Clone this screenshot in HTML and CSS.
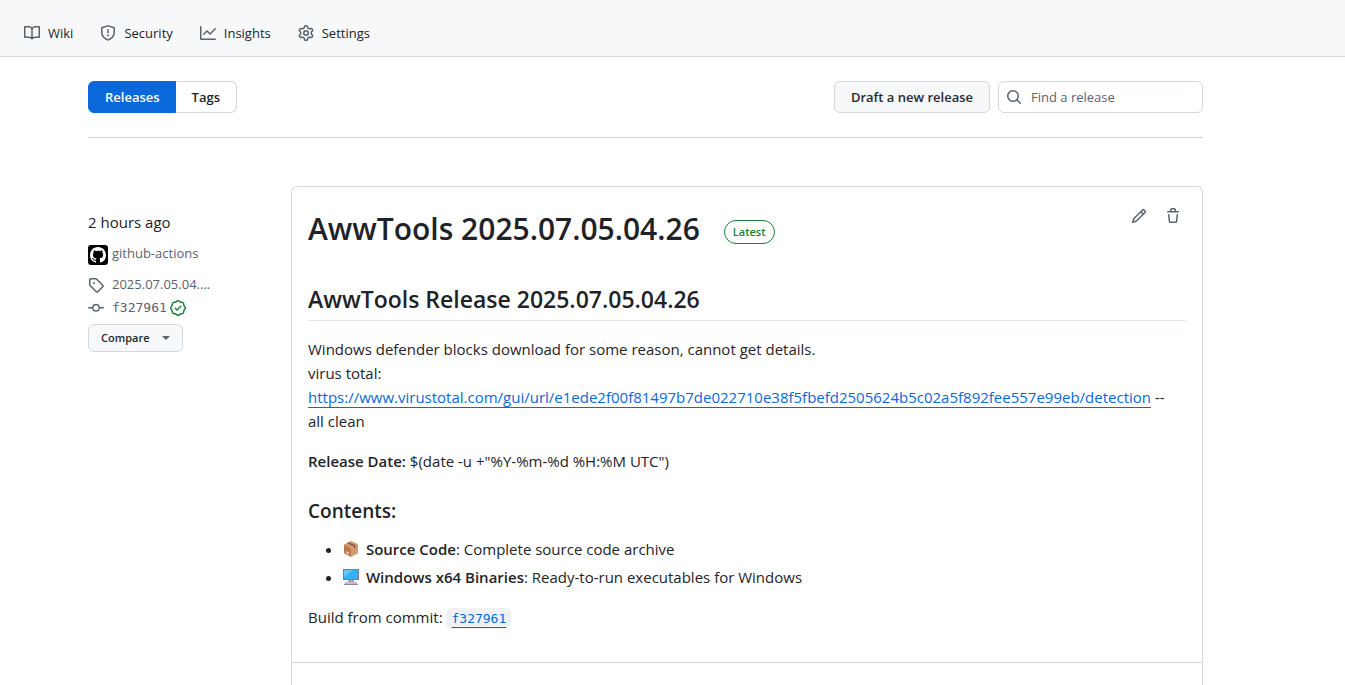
FILE: index.html
```html
<!DOCTYPE html>
<html lang="en">
<head>
<meta charset="utf-8">
<meta name="viewport" content="width=device-width, initial-scale=1">
<title>Releases</title>
<link rel="stylesheet" href="styles.css">
</head>
<body>
<header class="repo-header">
  <nav class="repo-nav" aria-label="Repository">
    <a class="repo-link" href="#wiki"><svg class="icon" viewBox="0 0 16 16" aria-hidden="true"><path d="M0 1.75A.75.75 0 0 1 .75 1h4.253c1.227 0 2.317.59 3 1.501A3.743 3.743 0 0 1 11.006 1h4.245a.75.75 0 0 1 .75.75v10.5a.75.75 0 0 1-.75.75h-4.507a2.25 2.25 0 0 0-1.591.659l-.622.621a.75.75 0 0 1-1.06 0l-.622-.621A2.25 2.25 0 0 0 5.258 13H.75a.75.75 0 0 1-.75-.75Zm7.251 10.324.004-5.073-.002-2.253A2.25 2.25 0 0 0 5.003 2.5H1.5v9h3.757a3.75 3.75 0 0 1 1.994.574ZM8.755 4.75l-.004 7.322a3.752 3.752 0 0 1 1.992-.572H14.5v-9h-3.495a2.25 2.25 0 0 0-2.25 2.25Z"/></svg>Wiki</a>
    <a class="repo-link" href="#security"><svg class="icon" viewBox="0 0 16 16" aria-hidden="true"><path d="M7.467.133a1.748 1.748 0 0 1 1.066 0l5.25 1.68A1.75 1.75 0 0 1 15 3.48V7c0 1.566-.32 3.182-1.303 4.682-.983 1.498-2.585 2.813-5.032 3.855a1.697 1.697 0 0 1-1.33 0c-2.447-1.042-4.049-2.357-5.032-3.855C1.32 10.182 1 8.566 1 7V3.48a1.75 1.75 0 0 1 1.217-1.667Zm.61 1.429a.25.25 0 0 0-.153 0l-5.25 1.68a.25.25 0 0 0-.174.238V7c0 1.358.275 2.666 1.057 3.86.784 1.194 2.121 2.34 4.366 3.297a.196.196 0 0 0 .154 0c2.245-.956 3.582-2.104 4.366-3.298C13.225 9.666 13.5 8.36 13.5 7V3.48a.251.251 0 0 0-.174-.237l-5.25-1.68ZM8.75 4.75v3a.75.75 0 0 1-1.5 0v-3a.75.75 0 0 1 1.5 0ZM9 10.5a1 1 0 1 1-2 0 1 1 0 0 1 2 0Z"/></svg>Security</a>
    <a class="repo-link" href="#insights"><svg class="icon" viewBox="0 0 16 16" aria-hidden="true"><path d="M1.5 1.75V13.5h13.75a.75.75 0 0 1 0 1.5H.75a.75.75 0 0 1-.75-.75V1.75a.75.75 0 0 1 1.5 0Zm14.28 2.53-5.25 5.25a.75.75 0 0 1-1.06 0L7 7.06 4.28 9.78a.751.751 0 0 1-1.042-.018.751.751 0 0 1-.018-1.042l3.25-3.25a.75.75 0 0 1 1.06 0L10 7.94l4.72-4.72a.751.751 0 0 1 1.042.018.751.751 0 0 1 .018 1.042Z"/></svg>Insights</a>
    <a class="repo-link" href="#settings"><svg class="icon" viewBox="0 0 16 16" aria-hidden="true"><path d="M8 0a8.2 8.2 0 0 1 .701.031C9.444.095 9.99.645 10.16 1.29l.288 1.107c.018.066.079.158.212.224.231.114.454.243.668.386.123.082.233.09.299.071l1.103-.303c.644-.176 1.392.021 1.82.63.27.385.506.792.704 1.218.315.675.111 1.422-.364 1.891l-.814.806c-.049.048-.098.147-.088.294.016.257.016.515 0 .772-.01.147.038.246.088.294l.814.806c.475.469.679 1.216.364 1.891a7.977 7.977 0 0 1-.704 1.217c-.428.61-1.176.807-1.82.63l-1.102-.302c-.067-.019-.177-.011-.3.071a5.909 5.909 0 0 1-.668.386c-.133.066-.194.158-.211.224l-.29 1.106c-.168.646-.715 1.196-1.458 1.26a8.006 8.006 0 0 1-1.402 0c-.743-.064-1.289-.614-1.458-1.26l-.289-1.106c-.018-.066-.079-.158-.212-.224a5.738 5.738 0 0 1-.668-.386c-.123-.082-.233-.09-.299-.071l-1.103.303c-.644.176-1.392-.021-1.82-.63a8.12 8.12 0 0 1-.704-1.218c-.315-.675-.111-1.422.363-1.891l.815-.806c.05-.048.098-.147.088-.294a6.214 6.214 0 0 1 0-.772c.01-.147-.038-.246-.088-.294l-.815-.806C.635 6.045.431 5.298.746 4.623a7.92 7.92 0 0 1 .704-1.217c.428-.61 1.176-.807 1.82-.63l1.102.302c.067.019.177.011.3-.071.214-.143.437-.272.668-.386.133-.066.194-.158.211-.224l.29-1.106C6.009.645 6.556.095 7.299.03 7.53.01 7.764 0 8 0Zm-.571 1.525c-.036.003-.108.036-.137.146l-.289 1.105c-.147.561-.549.967-.998 1.189-.173.086-.34.183-.5.29-.417.278-.97.423-1.529.27l-1.103-.303c-.109-.03-.175.016-.195.045-.22.312-.412.644-.573.99-.014.031-.021.11.059.19l.815.806c.411.406.562.957.53 1.456a4.709 4.709 0 0 0 0 .582c.032.499-.119 1.05-.53 1.456l-.815.806c-.081.08-.073.159-.059.19.162.346.353.677.573.989.02.03.085.076.195.046l1.102-.303c.56-.153 1.113-.008 1.53.27.161.107.328.204.501.29.447.222.85.629.997 1.189l.289 1.105c.029.109.101.143.137.146a6.6 6.6 0 0 0 1.142 0c.036-.003.108-.036.137-.146l.289-1.105c.147-.561.549-.967.998-1.189.173-.086.34-.183.5-.29.417-.278.97-.423 1.529-.27l1.103.303c.109.029.175-.016.195-.045.22-.313.411-.644.573-.99.014-.031.021-.11-.059-.19l-.815-.806c-.411-.406-.562-.957-.53-1.456a4.709 4.709 0 0 0 0-.582c-.032-.499.119-1.05.53-1.456l.815-.806c.081-.08.073-.159.059-.19a6.464 6.464 0 0 0-.573-.989c-.02-.03-.085-.076-.195-.046l-1.102.303c-.56.153-1.113.008-1.53-.27a4.44 4.44 0 0 0-.501-.29c-.447-.222-.85-.629-.997-1.189l-.289-1.105c-.029-.11-.101-.143-.137-.146a6.6 6.6 0 0 0-1.142 0ZM11 8a3 3 0 1 1-6 0 3 3 0 0 1 6 0ZM9.5 8a1.5 1.5 0 1 0-3.001.001A1.5 1.5 0 0 0 9.5 8Z"/></svg>Settings</a>
  </nav>
</header>

<main class="page">
  <div class="toolbar">
    <nav class="tabs" aria-label="Releases and tags">
      <a class="tab tab-current" href="#releases" aria-current="page">Releases</a>
      <a class="tab" href="#tags">Tags</a>
    </nav>
    <div class="actions">
      <button class="button" type="button">Draft a new release</button>
      <label class="search">
        <svg class="icon" viewBox="0 0 16 16" aria-hidden="true"><path d="M10.68 11.74a6 6 0 0 1-7.922-8.982 6 6 0 0 1 8.982 7.922l3.04 3.04a.749.749 0 0 1-.326 1.275.749.749 0 0 1-.734-.215ZM11.5 7a4.499 4.499 0 1 0-8.997 0A4.499 4.499 0 0 0 11.5 7Z"/></svg>
        <input class="search-input" type="search" placeholder="Find a release" aria-label="Find a release">
      </label>
    </div>
  </div>

  <section class="release">
    <aside class="meta">
      <time class="meta-time">2 hours ago</time>
      <a class="meta-row meta-author" href="#author"><svg class="avatar" viewBox="0 0 20 20" aria-hidden="true"><rect width="20" height="20" rx="3" fill="#000"/><path fill="#fff" transform="translate(2 2)" d="M8 0c4.42 0 8 3.58 8 8a8.013 8.013 0 0 1-5.45 7.59c-.4.08-.55-.17-.55-.38 0-.27.01-1.13.01-2.2 0-.75-.25-1.23-.54-1.48 1.78-.2 3.65-.88 3.65-3.95 0-.88-.31-1.59-.82-2.15.08-.2.36-1.02-.08-2.12 0 0-.67-.22-2.2.82-.64-.18-1.32-.27-2-.27-.68 0-1.36.09-2 .27-1.53-1.03-2.2-.82-2.2-.82-.44 1.1-.16 1.92-.08 2.12-.51.56-.82 1.28-.82 2.15 0 3.06 1.86 3.75 3.64 3.95-.23.2-.44.55-.51 1.07-.46.21-1.61.55-2.33-.66-.15-.24-.6-.83-1.23-.82-.67.01-.27.38.01.53.34.19.73.9.82 1.13.16.45.68 1.31 2.69.94 0 .67.01 1.3.01 1.49 0 .21-.15.45-.55.38A7.995 7.995 0 0 1 0 8c0-4.42 3.58-8 8-8Z"/></svg><span>github-actions</span></a>
      <a class="meta-row" href="#tag"><svg class="icon" viewBox="0 0 16 16" aria-hidden="true"><path d="M1 7.775V2.75C1 1.784 1.784 1 2.75 1h5.025c.464 0 .91.184 1.238.513l6.25 6.25a1.75 1.75 0 0 1 0 2.474l-5.026 5.026a1.75 1.75 0 0 1-2.474 0l-6.25-6.25A1.752 1.752 0 0 1 1 7.775Zm1.5 0c0 .066.026.13.073.177l6.25 6.25a.25.25 0 0 0 .354 0l5.025-5.025a.25.25 0 0 0 0-.354l-6.25-6.25a.25.25 0 0 0-.177-.073H2.75a.25.25 0 0 0-.25.25ZM6 5a1 1 0 1 1 0 2 1 1 0 0 1 0-2Z"/></svg><span>2025.07.05.04....</span></a>
      <div class="meta-row"><svg class="icon" viewBox="0 0 16 16" aria-hidden="true"><path d="M11.93 8.5a4.002 4.002 0 0 1-7.86 0H.75a.75.75 0 0 1 0-1.5h3.32a4.002 4.002 0 0 1 7.86 0h3.32a.75.75 0 0 1 0 1.5Zm-1.43-.75a2.5 2.5 0 1 0-5 0 2.5 2.5 0 0 0 5 0Z"/></svg><a class="commit" href="#commit">f327961</a><svg class="icon verified" viewBox="0 0 16 16" role="img" aria-label="Verified"><path d="m9.585.52.929.68c.153.112.331.186.518.215l1.138.175a2.678 2.678 0 0 1 2.24 2.24l.174 1.139c.029.187.103.365.215.518l.68.928a2.677 2.677 0 0 1 0 3.17l-.68.928a1.174 1.174 0 0 0-.215.518l-.175 1.138a2.678 2.678 0 0 1-2.241 2.241l-1.138.175a1.17 1.17 0 0 0-.518.215l-.928.68a2.677 2.677 0 0 1-3.17 0l-.928-.68a1.174 1.174 0 0 0-.518-.215L3.83 14.41a2.678 2.678 0 0 1-2.24-2.24l-.175-1.138a1.17 1.17 0 0 0-.215-.518l-.68-.928a2.677 2.677 0 0 1 0-3.17l.68-.928c.112-.153.186-.331.215-.518l.175-1.14a2.678 2.678 0 0 1 2.24-2.24l1.139-.175c.187-.029.365-.103.518-.215l.928-.68a2.677 2.677 0 0 1 3.17 0ZM7.303 1.728l-.927.68a2.67 2.67 0 0 1-1.18.489l-1.137.174a1.179 1.179 0 0 0-.987.987l-.174 1.136a2.677 2.677 0 0 1-.489 1.18l-.68.928a1.18 1.18 0 0 0 0 1.394l.68.927c.256.348.424.753.489 1.18l.174 1.137c.078.509.478.909.987.987l1.136.174a2.67 2.67 0 0 1 1.18.489l.928.68c.414.305.979.305 1.394 0l.927-.68a2.67 2.67 0 0 1 1.18-.489l1.137-.174a1.18 1.18 0 0 0 .987-.987l.174-1.136a2.67 2.67 0 0 1 .489-1.18l.68-.928a1.176 1.176 0 0 0 0-1.394l-.68-.927a2.686 2.686 0 0 1-.489-1.18l-.174-1.137a1.179 1.179 0 0 0-.987-.987l-1.136-.174a2.677 2.677 0 0 1-1.18-.489l-.928-.68a1.176 1.176 0 0 0-1.394 0ZM11.28 6.78l-3.75 3.75a.75.75 0 0 1-1.06 0L4.72 8.78a.751.751 0 0 1 .018-1.042.751.751 0 0 1 1.042-.018L7 8.94l3.22-3.22a.751.751 0 0 1 1.042.018.751.751 0 0 1 .018 1.042Z"/></svg></div>
      <button class="button button-small" type="button">Compare<span class="caret"></span></button>
    </aside>

    <article class="card">
      <div class="card-body">
        <div class="card-head">
          <h1 class="title">AwwTools 2025.07.05.04.26</h1>
          <span class="badge">Latest</span>
          <div class="card-tools">
            <button class="icon-button" type="button" aria-label="Edit release"><svg class="icon" viewBox="0 0 16 16" aria-hidden="true"><path d="M11.013 1.427a1.75 1.75 0 0 1 2.474 0l1.086 1.086a1.75 1.75 0 0 1 0 2.474l-8.61 8.61c-.21.21-.47.364-.756.445l-3.251.93a.75.75 0 0 1-.927-.928l.929-3.25c.081-.286.235-.547.445-.758l8.61-8.61Zm.176 4.823L9.75 4.81l-6.286 6.287a.253.253 0 0 0-.064.108l-.558 1.953 1.953-.558a.253.253 0 0 0 .108-.064Zm1.238-3.763a.25.25 0 0 0-.354 0L10.811 3.75l1.439 1.44 1.263-1.263a.25.25 0 0 0 0-.354Z"/></svg></button>
            <button class="icon-button" type="button" aria-label="Delete release"><svg class="icon" viewBox="0 0 16 16" aria-hidden="true"><path d="M11 1.75V3h2.25a.75.75 0 0 1 0 1.5H2.75a.75.75 0 0 1 0-1.5H5V1.75C5 .784 5.784 0 6.75 0h2.5C10.216 0 11 .784 11 1.75ZM4.496 6.675l.66 6.6a.25.25 0 0 0 .249.225h5.19a.25.25 0 0 0 .249-.225l.66-6.6a.75.75 0 0 1 1.492.149l-.66 6.6A1.748 1.748 0 0 1 10.595 15h-5.19a1.75 1.75 0 0 1-1.741-1.575l-.66-6.6a.75.75 0 1 1 1.492-.15ZM6.5 1.75V3h3V1.75a.25.25 0 0 0-.25-.25h-2.5a.25.25 0 0 0-.25.25Z"/></svg></button>
          </div>
        </div>
        <div class="notes">
          <h2>AwwTools Release 2025.07.05.04.26</h2>
          <p>Windows defender blocks download for some reason, cannot get details.<br>virus total:<br><a class="link" href="#detection">https://www.virustotal.com/gui/url/e1ede2f00f81497b7de022710e38f5fbefd2505624b5c02a5f892fee557e99eb/detection</a> -- all&nbsp;clean</p>
          <p><strong>Release Date:</strong> $(date -u +"%Y-%m-%d %H:%M UTC")</p>
          <h3>Contents:</h3>
          <ul>
            <li><svg class="emoji" viewBox="0 0 16 16" aria-hidden="true"><path fill="#cf9468" d="M8 0 15 3.2 8 7 1 3.5z"/><path fill="#b97850" d="M1 3.5 8 7v9l-7-3.7z"/><path fill="#d79b70" d="M8 7l7-3.8v9L8 16z"/><path fill="#8a5539" d="M4 2 5.5 1.3 12.5 4.6v2.2L11 7.6V5.4z"/><path fill="#e8c3aa" d="m3 10 3 1.6v2L3 12z"/></svg> <strong>Source Code</strong>: Complete source code archive</li>
            <li><svg class="emoji" viewBox="0 0 16 16" aria-hidden="true"><path fill="#7c7a91" d="M0 0h16v11H0z"/><path fill="#35b2f2" d="M1 1h14v9H1z"/><path fill="#65c8fa" d="M1 1h9L1 8z"/><path fill="#a7a2b4" d="M5 11h6v2H5z"/><path fill="#c6bdca" d="M2 13h12l1 3H1z"/><path fill="#8e889f" d="M1 15h14v1H1z"/></svg> <strong>Windows x64 Binaries</strong>: Ready-to-run executables for Windows</li>
          </ul>
          <p>Build from commit: <code><a class="link" href="#commit">f327961</a></code></p>
        </div>
      </div>
      <div class="card-assets"></div>
    </article>
  </section>
</main>
</body>
</html>
```

FILE: styles.css
```css
* {
  box-sizing: border-box;
}

body {
  display: flex;
  flex-direction: column;
  min-height: 100vh;
  margin: 0;
  background: #fff;
  color: #1f2328;
  font: 15px/24px "Open Sans", "Noto Sans", sans-serif;
}

a {
  color: inherit;
  text-decoration: none;
}

.icon {
  flex: none;
  width: 16px;
  height: 16px;
  fill: #59636e;
}

.repo-header {
  padding: 22px 24px 12px;
  border-bottom: 1px solid #d1d9e0;
  background: #f6f8fa;
}

.repo-nav {
  display: flex;
  gap: 27px;
}

.repo-link {
  display: flex;
  align-items: center;
  gap: 8px;
  font-size: 13px;
  line-height: 22px;
}

.page {
  display: flex;
  flex: 1;
  flex-direction: column;
  padding: 24px 142px 0 88px;
}

.toolbar {
  display: flex;
  justify-content: space-between;
  padding-bottom: 24px;
  border-bottom: 1px solid #d1d9e0;
}

.tabs,
.actions {
  display: flex;
}

.actions {
  gap: 8px;
}

.tab {
  padding: 0 16px;
  border: 1px solid #d1d9e0;
  border-left: 0;
  border-radius: 0 6px 6px 0;
  font-size: 13px;
  font-weight: 600;
  line-height: 30px;
}

.tab-current {
  padding: 0 15px 0 16px;
  border: 1px solid #0969da;
  border-radius: 6px 0 0 6px;
  background: #0969da;
  color: #fff;
}

.button {
  height: 32px;
  padding: 0 16px;
  border: 1px solid #d1d9e0;
  border-radius: 6px;
  background: #f6f8fa;
  color: #25292e;
  font: 600 13px/20px "Open Sans", "Noto Sans", sans-serif;
}

.button-small {
  display: flex;
  align-items: center;
  align-self: flex-start;
  gap: 12px;
  height: 28px;
  margin-top: 5px;
  padding: 0 12px;
  font-size: 11px;
}

.caret {
  border: 4px solid transparent;
  border-top-color: #59636e;
  border-bottom: 0;
}

.search {
  display: flex;
  align-items: center;
  gap: 9px;
  width: 205px;
  padding: 0 7px;
  border: 1px solid #d1d9e0;
  border-radius: 6px;
}

.search-input {
  width: 100%;
  min-width: 0;
  padding: 0;
  border: 0;
  outline: 0;
  background: none;
  color: #1f2328;
  font: 13px/20px "Open Sans", "Noto Sans", sans-serif;
}

.search-input::placeholder {
  color: #59636e;
}

.release {
  display: grid;
  flex: 1;
  grid-template-columns: 187px minmax(0, 1fr);
  gap: 16px;
  padding-top: 48px;
}

.meta {
  display: flex;
  flex-direction: column;
  padding-top: 24px;
}

.meta-row {
  display: flex;
  align-items: center;
  gap: 8px;
  color: #59636e;
  font-size: 13px;
  line-height: 23px;
}

.meta-author {
  align-items: flex-end;
  gap: 4px;
  margin: 8px 0;
}

.avatar {
  width: 20px;
  height: 20px;
}

.commit {
  font-family: "DejaVu Sans Mono", "Liberation Mono", monospace;
}

.meta-row .verified {
  margin-left: -5px;
  fill: #1a7f37;
}

.card {
  display: flex;
  flex-direction: column;
  border: 1px solid #d1d9e0;
  border-bottom: 0;
  border-radius: 6px 6px 0 0;
}

.card-body {
  padding: 16px 16px 33px;
}

.card-assets {
  flex: 1;
  border-top: 1px solid #d1d9e0;
}

.card-head {
  display: flex;
  align-items: center;
}

.title {
  margin: 0 24px 0 0;
  font-size: 30px;
  font-weight: 600;
  line-height: 52px;
}

.badge {
  margin-top: 6px;
  padding: 0 8px;
  border: 1px solid #1a7f37;
  border-radius: 12px;
  color: #1a7f37;
  font-size: 11px;
  font-weight: 600;
  line-height: 22px;
}

.card-tools {
  display: flex;
  align-self: flex-start;
  gap: 8px;
  margin-left: auto;
}

.icon-button {
  display: grid;
  place-items: center;
  width: 26px;
  height: 26px;
  padding: 0;
  border: 0;
  background: none;
}

.notes {
  padding-top: 29px;
}

.notes h2,
.notes h3 {
  margin: 0;
  font-weight: 600;
}

.notes h2 {
  padding-bottom: 6px;
  border-bottom: 1px solid #dfe4e8;
  font-size: 23px;
  line-height: 30px;
}

.notes h3 {
  margin-top: 26px;
  font-size: 19px;
  line-height: 24px;
}

.notes p {
  margin: 16px 0 0;
}

.notes ul {
  margin: 14px 0 0;
  padding-left: 35px;
}

.notes li + li {
  margin-top: 4px;
}

.notes strong {
  font-weight: 600;
}

.link {
  color: #0969da;
  text-decoration: underline;
  text-underline-offset: 4px;
}

.emoji {
  width: 16px;
  height: 16px;
  margin-right: 3px;
  vertical-align: -2px;
}

.notes code {
  padding: 3px 5px;
  border-radius: 6px;
  background: #eff1f3;
  font: 13px "DejaVu Sans Mono", "Liberation Mono", monospace;
}
```
